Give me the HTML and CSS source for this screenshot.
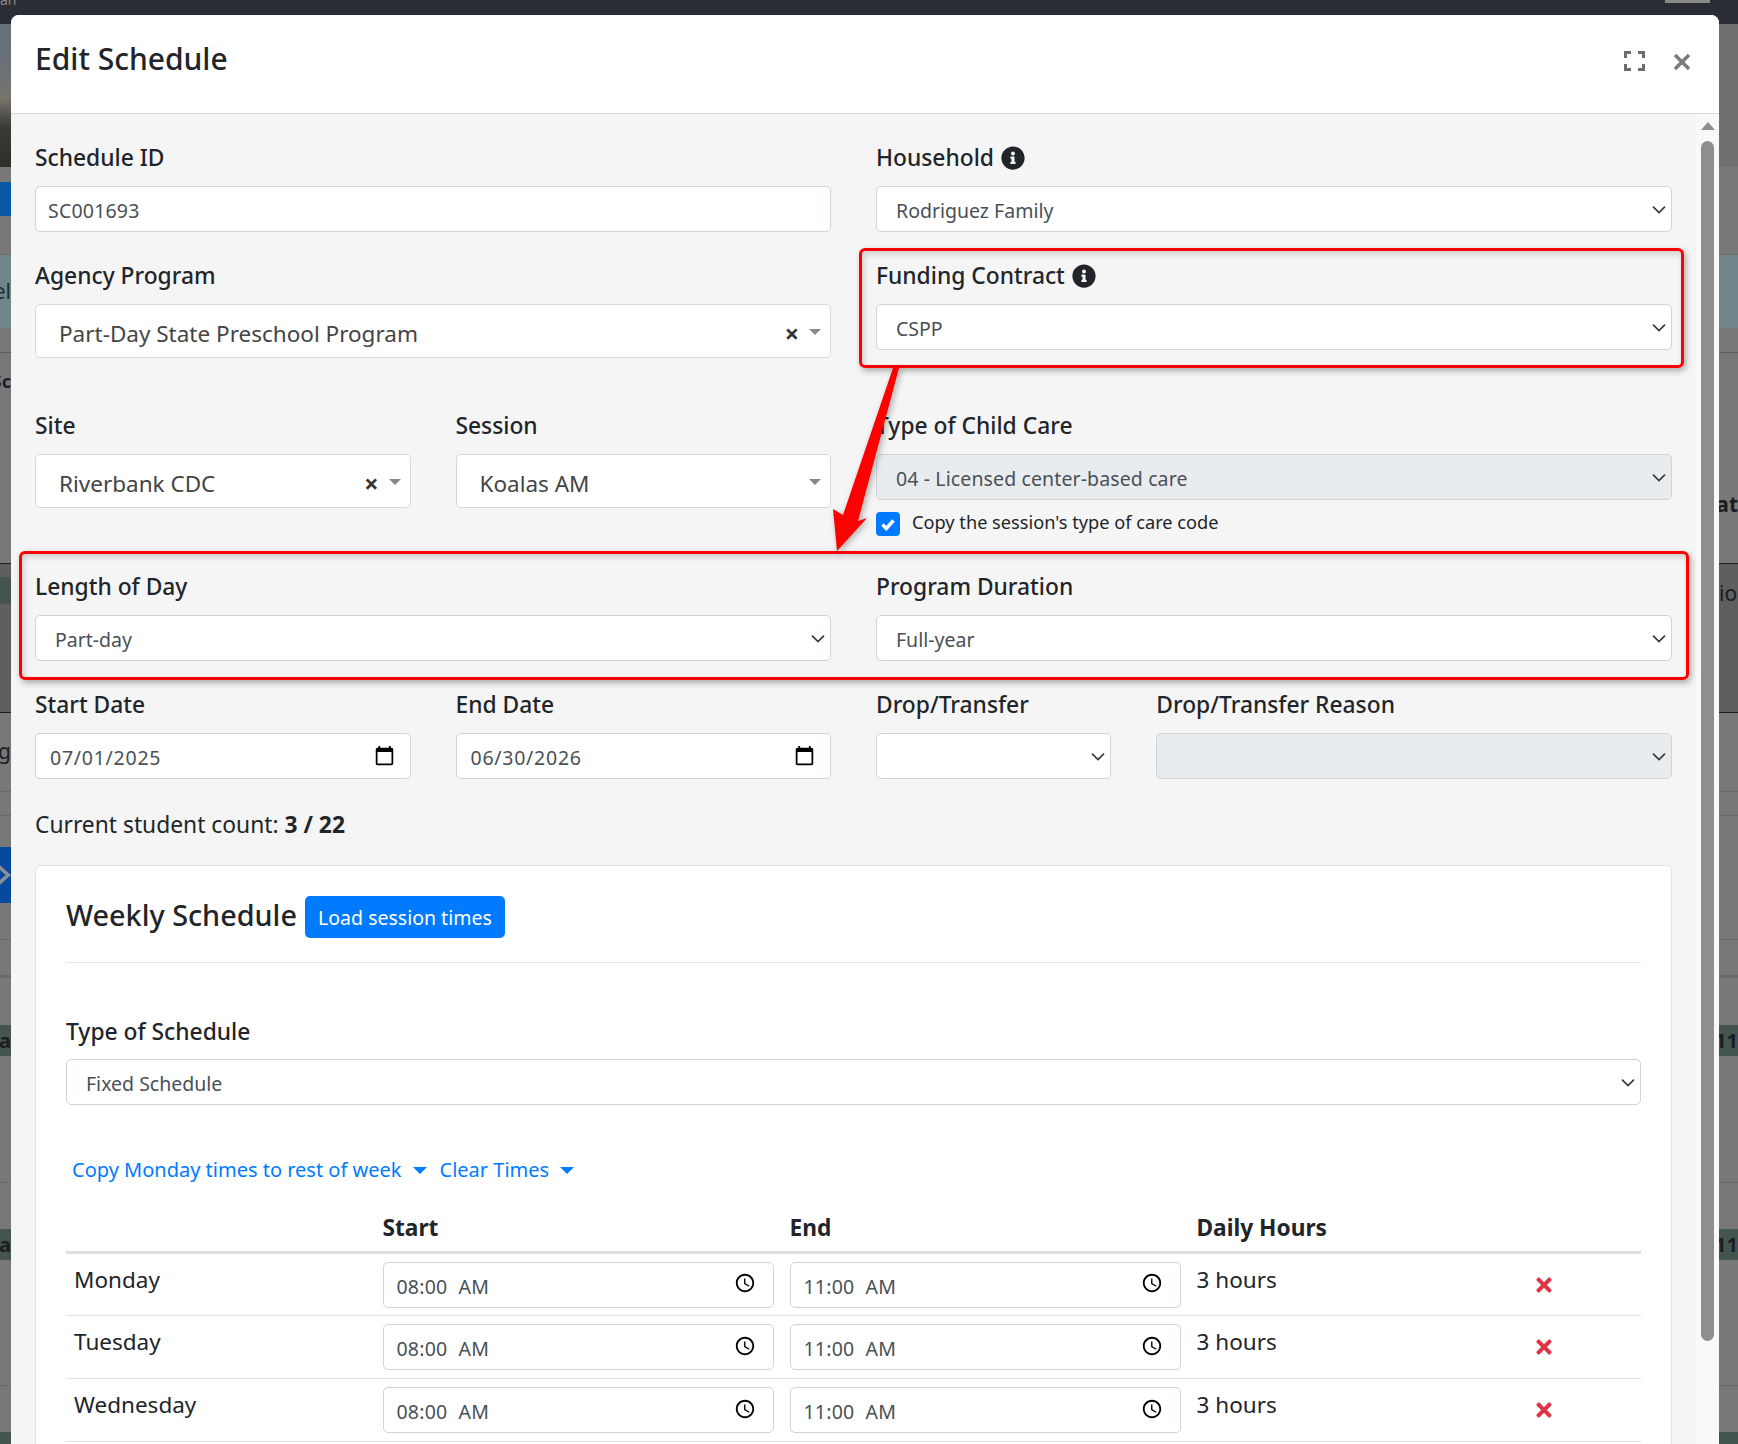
FILE: index.html
```html
<!DOCTYPE html>
<html lang="en">
<head>
<meta charset="utf-8">
<title>Edit Schedule</title>
<link rel="stylesheet" href="styles.css">
</head>
<body>
<svg class="defs" aria-hidden="true">
  <symbol id="chev" viewBox="0 0 14 8"><path d="M1.5 1.2 7 6.6l5.5-5.4" fill="none" stroke="#343a40" stroke-width="1.700" stroke-linecap="round"/></symbol>
  <symbol id="info" viewBox="0 0 512 512"><path d="M256 8C119 8 8 119 8 256s111 248 248 248 248-111 248-248S393 8 256 8zm0 110c23.196 0 42 18.804 42 42s-18.804 42-42 42-42-18.804-42-42 18.804-42 42-42zm56 254c0 6.627-5.373 12-12 12h-88c-6.627 0-12-5.373-12-12v-24c0-6.627 5.373-12 12-12h12v-64h-12c-6.627 0-12-5.373-12-12v-24c0-6.627 5.373-12 12-12h64c6.627 0 12 5.373 12 12v100h12c6.627 0 12 5.373 12 12v24z"/></symbol>
  <symbol id="cal" viewBox="0 0 24 24"><path d="M20 3h-1V1h-2v2H7V1H5v2H4c-1.1 0-2 .9-2 2v16c0 1.1.9 2 2 2h16c1.1 0 2-.9 2-2V5c0-1.1-.9-2-2-2zm0 18H4V8h16v13z"/></symbol>
  <symbol id="clock" viewBox="0 0 24 24"><path d="M11.99 2C6.47 2 2 6.48 2 12s4.47 10 9.99 10C17.52 22 22 17.52 22 12S17.52 2 11.99 2zM12 20c-4.42 0-8-3.58-8-8s3.58-8 8-8 8 3.58 8 8-3.58 8-8 8zm.5-13H11v6l5.25 3.15.75-1.23-4.5-2.67z"/></symbol>
  <symbol id="times" viewBox="0 0 352 512"><path d="M242.72 256l100.07-100.07c12.28-12.28 12.28-32.19 0-44.48l-22.24-22.24c-12.28-12.28-32.19-12.28-44.48 0L176 189.28 75.93 89.21c-12.28-12.28-32.19-12.28-44.48 0L9.21 111.45c-12.28 12.28-12.28 32.19 0 44.48L109.28 256 9.21 356.07c-12.28 12.28-12.28 32.19 0 44.48l22.24 22.24c12.28 12.28 32.2 12.28 44.48 0L176 322.72l100.07 100.07c12.28 12.28 32.2 12.28 44.48 0l22.24-22.24c12.28-12.28 12.28-32.19 0-44.48L242.72 256z"/></symbol>
</svg>

<div class="backdrop">
  <div class="bd-top"><span class="bd-top-text">an</span><span class="bd-top-btn"></span></div>
  <div class="bd-hero"><div class="bd-photo"></div></div>
  <div class="bd-h15"></div>
  <div class="bd-blue-row"><div class="bd-blue"></div></div>
  <div class="bd-h39 bd-rule"></div>
  <div class="bd-teal-light"><span class="frag-l">el</span></div>
  <div class="bd-h25 bd-line"></div>
  <div class="bd-sc"><span class="frag-l bd-bold">Sc</span><span class="frag-r bd-bold">eat</span></div>
  <div class="bd-dark">
    <div class="bd-teal-row"></div>
    <span class="frag-r">io</span>
  </div>
  <div class="bd-g"><span class="frag-l">g</span></div>
  <div class="bd-h24 bd-rule"></div>
  <div class="bd-arrow-row"><div class="bd-blue bd-blue-big">
    <svg class="bd-chev" viewBox="0 0 12 24"><path d="M-1 3 9 12-1 21" fill="none" stroke="#8a8f96" stroke-width="4"/></svg>
  </div></div>
  <div class="bd-h36 bd-rule"></div>
  <div class="bd-h38 bd-thick"></div>
  <div class="bd-h47"></div>
  <div class="bd-teal"><span class="frag-l bd-bold">a</span><span class="frag-r bd-bold">11</span></div>
  <div class="bd-h127 bd-rule"></div>
  <div class="bd-h46"></div>
  <div class="bd-teal"><span class="frag-l bd-bold">a</span><span class="frag-r bd-bold">11</span></div>
  <div class="bd-h125 bd-rule"></div>
  <div class="bd-h46"></div>
  <div class="bd-teal"></div>
</div>

<div class="modal">
  <header class="modal-header">
    <h1 class="modal-title">Edit Schedule</h1>
    <div class="modal-tools">
      <svg class="ico-full" viewBox="0 0 21 20"><path d="M1.5 7V1.5H7M14 1.5h5.5V7M19.5 13v5.500H14M7 18.500H1.500V13" fill="none" stroke="#6c6c6c" stroke-width="3"/></svg>
      <svg class="ico-close" viewBox="0 0 18 18"><path d="M2 2 16 16M16 2 2 16" fill="none" stroke="#7b7b7b" stroke-width="3.600"/></svg>
    </div>
  </header>
  <div class="modal-body">
    <div class="modal-content">
      <div class="form-grid">
        <div class="field span-6 pitch-a">
          <div class="label">Schedule ID</div>
          <div class="control text-input">SC001693</div>
        </div>
        <div class="field span-6 pitch-a">
          <div class="label">Household <svg class="info"><use href="#info"/></svg></div>
          <div class="control select">Rodriguez Family<svg class="chev"><use href="#chev"/></svg></div>
        </div>

        <div class="field span-6 pitch-b">
          <div class="label">Agency Program</div>
          <div class="control select2"><span class="s2-text">Part-Day State Preschool Program</span><span class="s2-x">×</span><span class="s2-caret"></span></div>
        </div>
        <div class="field span-6 pitch-b">
          <div class="label">Funding Contract <svg class="info"><use href="#info"/></svg></div>
          <div class="control select">CSPP<svg class="chev"><use href="#chev"/></svg></div>
        </div>

        <div class="field span-3 pitch-c">
          <div class="label">Site</div>
          <div class="control select2"><span class="s2-text">Riverbank CDC</span><span class="s2-x">×</span><span class="s2-caret"></span></div>
        </div>
        <div class="field span-3 pitch-c">
          <div class="label">Session</div>
          <div class="control select2"><span class="s2-text">Koalas AM</span><span class="s2-caret"></span></div>
        </div>
        <div class="field span-6 pitch-c">
          <div class="label">Type of Child Care</div>
          <div class="control select disabled">04 - Licensed center-based care<svg class="chev"><use href="#chev"/></svg></div>
          <div class="check-row">
            <span class="checkbox"><svg viewBox="0 0 24 24"><path d="M6.500 12.500 10.300 16.500 17.500 8.500" fill="none" stroke="#fff" stroke-width="3.400"/></svg></span>
            <span class="check-label">Copy the session's type of care code</span>
          </div>
        </div>

        <div class="field span-6 pitch-a">
          <div class="label">Length of Day</div>
          <div class="control select">Part-day<svg class="chev"><use href="#chev"/></svg></div>
        </div>
        <div class="field span-6 pitch-a">
          <div class="label">Program Duration</div>
          <div class="control select">Full-year<svg class="chev"><use href="#chev"/></svg></div>
        </div>

        <div class="field span-3">
          <div class="label">Start Date</div>
          <div class="control date-input">07/01/2025<svg class="cal"><use href="#cal"/></svg></div>
        </div>
        <div class="field span-3">
          <div class="label">End Date</div>
          <div class="control date-input">06/30/2026<svg class="cal"><use href="#cal"/></svg></div>
        </div>
        <div class="field span-2">
          <div class="label">Drop/Transfer</div>
          <div class="control select"><svg class="chev"><use href="#chev"/></svg></div>
        </div>
        <div class="field span-4">
          <div class="label">Drop/Transfer Reason</div>
          <div class="control select disabled"><svg class="chev"><use href="#chev"/></svg></div>
        </div>
      </div>

      <p class="count">Current student count: <strong>3 / 22</strong></p>

      <section class="card">
        <div class="card-head">
          <h2 class="card-title">Weekly Schedule</h2>
          <button class="btn-primary" type="button">Load session times</button>
        </div>
        <div class="card-rule"></div>
        <div class="label">Type of Schedule</div>
        <div class="control select">Fixed Schedule<svg class="chev"><use href="#chev"/></svg></div>

        <div class="link-row">
          <a class="link">Copy Monday times to rest of week<span class="link-caret"></span></a>
          <a class="link">Clear Times<span class="link-caret"></span></a>
        </div>

        <table class="times">
          <colgroup><col class="c-day"><col class="c-time"><col class="c-time"><col class="c-hours"><col></colgroup>
          <thead>
            <tr><th></th><th>Start</th><th>End</th><th>Daily Hours</th><th></th></tr>
          </thead>
          <tbody>
            <tr>
              <td class="txt">Monday</td>
              <td><div class="control time-input">08:00 AM<svg class="clock"><use href="#clock"/></svg></div></td>
              <td><div class="control time-input">11:00 AM<svg class="clock"><use href="#clock"/></svg></div></td>
              <td class="txt">3 hours</td>
              <td class="del"><svg class="times-ico"><use href="#times"/></svg></td>
            </tr>
            <tr>
              <td class="txt">Tuesday</td>
              <td><div class="control time-input">08:00 AM<svg class="clock"><use href="#clock"/></svg></div></td>
              <td><div class="control time-input">11:00 AM<svg class="clock"><use href="#clock"/></svg></div></td>
              <td class="txt">3 hours</td>
              <td class="del"><svg class="times-ico"><use href="#times"/></svg></td>
            </tr>
            <tr>
              <td class="txt">Wednesday</td>
              <td><div class="control time-input">08:00 AM<svg class="clock"><use href="#clock"/></svg></div></td>
              <td><div class="control time-input">11:00 AM<svg class="clock"><use href="#clock"/></svg></div></td>
              <td class="txt">3 hours</td>
              <td class="del"><svg class="times-ico"><use href="#times"/></svg></td>
            </tr>
          </tbody>
        </table>
      </section>
    </div>
    <div class="scrollbar">
      <span class="sb-up"></span>
      <span class="sb-thumb"></span>
    </div>
  </div>
</div>

<div class="callout callout-contract"></div>
<div class="callout callout-length"></div>
<svg class="callout-arrow" viewBox="0 0 1738 1444"><polygon points="893,368 899,368 858,521 867,518 837,551 833,509 843,515" fill="#ff0000"/></svg>
</body>
</html>
```

FILE: styles.css
```css
* { box-sizing: border-box; }
html, body { margin: 0; padding: 0; }
body {
  position: relative;
  width: 1738px;
  height: 1444px;
  overflow: hidden;
  font-family: "Noto Sans", "Open Sans", "Liberation Sans", sans-serif;
  color: #212529;
  background: #777;
}
.defs { display: none; }

/* dimmed page behind the dialog */
.backdrop { display: flex; flex-direction: column; height: 1444px; background: #787878; font-size: 21px; line-height: 29px; color: #1a1d20; }
.backdrop > * { flex: none; }
.bd-top { height: 24px; background: #2a2d33; display: flex; justify-content: space-between; padding-right: 28px; }
.bd-top-text { font-size: 14px; line-height: 6px; color: #888; margin-top: -3px; height: 6px; }
.bd-top-btn { width: 45px; height: 3px; background: #8a8a8a; }
.bd-hero { height: 143px; background: #707070; }
.bd-photo { width: 11px; height: 143px; background: linear-gradient(180deg, #66717c 0%, #6d7276 35%, #77746c 52%, #3c3a36 72%, #2f2d2a 100%); }
.bd-h15 { height: 15px; }
.bd-blue-row { height: 34px; }
.bd-blue { width: 11px; height: 100%; background: #0a57a8; }
.bd-h39 { height: 39px; }
.bd-rule { border-bottom: 1px solid #696969; }
.bd-teal-light { height: 73px; background: #71868a; display: flex; align-items: center; color: #1f2e38; }
.bd-h25 { height: 25px; }
.bd-line { border-bottom: 1px solid #5b5b5b; }
.bd-sc { height: 210px; display: flex; justify-content: space-between; align-items: flex-start; }
.bd-sc .frag-l { margin-top: 14px; font-size: 18px; }
.bd-sc .frag-r { margin-top: 137px; }
.bd-dark { height: 150px; background: #5f5f5f; border-top: 1px solid #1f1f1f; border-bottom: 1px solid #1f1f1f; display: flex; justify-content: space-between; align-items: flex-start; }
.bd-teal-row { width: 11px; height: 27px; margin-top: 13px; background: #44554f; }
.bd-dark .frag-r { margin-top: 15px; }
.bd-g { height: 79px; padding-top: 24px; border-bottom: 1px solid #696969; }
.bd-h24 { height: 24px; }
.bd-arrow-row { height: 56px; margin-top: 31px; }
.bd-blue-big { background: #054a9e; display: flex; justify-content: flex-end; align-items: center; }
.bd-chev { width: 11px; height: 24px; }
.bd-h36 { height: 37px; }
.bd-h38 { height: 38px; }
.bd-thick { border-bottom: 3px solid #6a6a6a; }
.bd-h47 { height: 47px; }
.bd-teal { height: 31px; background: #44554f; display: flex; justify-content: space-between; align-items: center; font-size: 20px; line-height: 31px; }
.bd-h127 { height: 127px; }
.bd-h46 { height: 46px; }
.bd-h125 { height: 126px; }
.frag-l { display: block; width: 11px; overflow: hidden; white-space: nowrap; direction: rtl; }
.frag-r { display: block; width: 19px; overflow: hidden; white-space: nowrap; direction: rtl; text-align: left; }
.bd-bold { font-weight: 700; }

/* dialog */
.modal {
  position: absolute;
  top: 15px;
  left: 11px;
  width: 1708px;
  height: 1429px;
  background: #f5f5f5;
  border-radius: 8px 8px 0 0;
  overflow: hidden;
  display: flex;
  flex-direction: column;
}
.modal-header {
  flex: none;
  height: 99px;
  background: #fff;
  border-bottom: 1px solid #d8d8d8;
  display: flex;
  justify-content: space-between;
  padding: 0 28px 0 24px;
}
.modal-title { margin: 26px 0 0; font-size: 30px; line-height: 36px; font-weight: 500; color: #212529; }
.modal-tools { display: flex; gap: 28px; padding-top: 36px; }
.ico-full { width: 21px; height: 20px; }
.ico-close { width: 18px; height: 18px; margin-top: 2px; }

.modal-body { flex: 1; display: flex; min-height: 0; }
.modal-content { flex: 1; min-width: 0; padding: 26px 24px 0; }
.scrollbar { flex: none; width: 23px; background: #f9f9f9; display: flex; flex-direction: column; align-items: center; padding-top: 8px; }
.sb-up { flex: none; width: 0; height: 0; border-left: 7px solid transparent; border-right: 7px solid transparent; border-bottom: 8px solid #8e8e8e; }
.sb-thumb { flex: none; width: 13px; height: 1200px; margin-top: 11px; background: #8e8e8e; border-radius: 7px; }

.form-grid { display: grid; grid-template-columns: repeat(12, 1fr); column-gap: 45px; align-items: start; }
.span-6 { grid-column: span 6; }
.span-4 { grid-column: span 4; }
.span-3 { grid-column: span 3; }
.span-2 { grid-column: span 2; }
.pitch-a { height: 118px; }
.pitch-b { height: 150px; }
.pitch-c { height: 161px; }

.label { display: flex; align-items: center; gap: 7px; height: 34px; padding-top: 2px; margin-bottom: 12px; font-size: 22.800px; line-height: 32px; font-weight: 500; color: #212529; white-space: nowrap; }
.info { width: 24px; height: 24px; fill: #212529; }

.control { display: flex; align-items: center; background: #fff; border: 1px solid #ced4da; border-radius: 5px; font-size: 19.500px; color: #495057; white-space: nowrap; }
.text-input { height: 46px; padding: 2px 13px 0 12px; letter-spacing: .2px; }
.select { height: 46px; padding: 2px 5px 0 19px; justify-content: space-between; }
.select.disabled { background: #e9ecef; letter-spacing: .12px; }
.chev { width: 14px; height: 8px; margin-left: auto; margin-top: 0; flex: none; }
.date-input { height: 46px; padding: 2px 15px 0 14px; justify-content: space-between; letter-spacing: .75px; }
.cal { width: 21px; height: 21px; fill: #000; margin-top: -4px; }
.select2 { height: 54px; padding: 0 9px 0 23px; font-size: 22.500px; border-color: #d5d9de; color: #444; }
.s2-text { flex: 1; overflow: hidden; padding-top: 5px; }
.s2-x { font-size: 25px; font-weight: 700; line-height: 1; color: #333; margin-right: 10px; margin-top: 5px; }
.s2-caret { width: 0; height: 0; border-left: 6px solid transparent; border-right: 6px solid transparent; border-top: 6px solid #888; margin-top: 2px; }

.check-row { display: flex; align-items: center; gap: 12px; margin-top: 12px; }
.checkbox { width: 24px; height: 24px; background: #007bff; border-radius: 4px; display: block; }
.checkbox svg { display: block; width: 24px; height: 24px; }
.check-label { font-size: 18.200px; line-height: 24px; color: #212529; margin-top: -4px; }

.count { margin: 0; height: 32px; margin-top: 30px; font-size: 22.800px; line-height: 32px; color: #212529; }
.count strong { font-weight: 700; }

.card { margin-top: 24px; background: #fff; border: 1px solid #e2e2e2; border-radius: 6px; padding: 30px 30px 0; height: 640px; }
.card-head { display: flex; align-items: center; gap: 8px; height: 42px; }
.card-title { margin: -4px 0 0; font-size: 28.800px; line-height: 36px; font-weight: 500; color: #212529; }
.btn-primary { height: 42px; width: 200px; padding: 0; border: 0; border-radius: 5px; background: #007bff; color: #fff; font: inherit; font-size: 19.500px; }
.card-rule { height: 1px; margin: 24px 0 51px; background: #e4e4e4; }
.card .label { margin-bottom: 11px; }

.link-row { display: flex; gap: 13px; height: 32px; margin-top: 49px; padding-left: 6px; line-height: 32px; }
.link { display: flex; align-items: center; font-size: 20px; color: #007bff; white-space: nowrap; }
.link-caret { width: 0; height: 0; margin-left: 11px; border-left: 7px solid transparent; border-right: 7px solid transparent; border-top: 7px solid #007bff; }

.times { width: 100%; table-layout: fixed; border-collapse: collapse; margin-top: 26px; }
.c-day { width: 308.500px; }
.c-time { width: 407px; }
.c-hours { width: 329px; }
.times th { height: 40px; padding: 0 8px 6px; text-align: left; font-size: 22.700px; line-height: 32px; font-weight: 700; color: #212529; border-bottom: 3px solid #dcdcdc; }
.times td { padding: 8px 8px 7.500px; border-bottom: 1px solid #dee2e6; vertical-align: top; height: 63px; }
.times td.txt { padding-top: 10px; font-size: 22.500px; line-height: 32px; color: #212529; }
.time-input { height: 46px; padding: 3px 17px 0 13px; justify-content: space-between; letter-spacing: .2px; word-spacing: 6px; }
.clock { width: 22px; height: 22px; fill: #000; margin-top: -6px; }
.times td.del { padding-left: 18px; padding-top: 20px; }
.times-ico { display: block; width: 16px; height: 22px; fill: #dc3545; }

/* red annotations drawn over the form */
.callout { position: absolute; border: 3px solid #f00; border-radius: 6px; box-shadow: 2px 3px 6px rgba(0,0,0,.3), inset 2px 3px 6px rgba(0,0,0,.16); }
.callout-contract { left: 859px; top: 248px; width: 825px; height: 120px; }
.callout-length { left: 19px; top: 551px; width: 1670px; height: 129px; }
.callout-arrow { position: absolute; left: 0; top: 0; width: 1738px; height: 1444px; pointer-events: none; filter: drop-shadow(2px 2px 3px rgba(0,0,0,.3)); }
```
